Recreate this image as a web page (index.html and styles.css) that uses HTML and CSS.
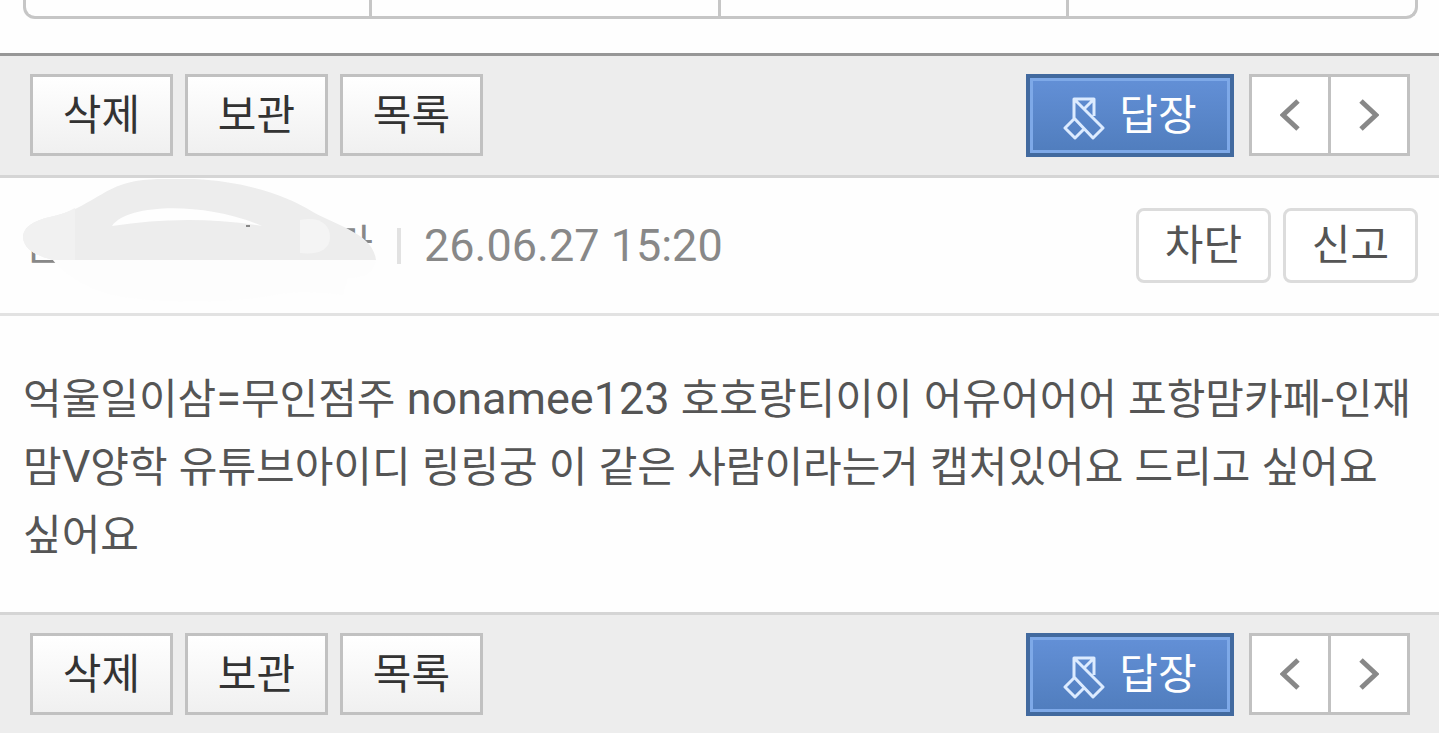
FILE: index.html
```
<!DOCTYPE html>
<html lang="ko">
  <head>
    <meta charset="UTF-8" />
    <meta name="viewport" content="width=device-width, initial-scale=1.0" />
    <title>쪽지</title>
    <link rel="stylesheet" href="styles.css">
  </head>

  <body>
    <div class="tabs">
      <div class="tab"></div>
      <div class="tab"></div>
      <div class="tab"></div>
      <div class="tab"></div>
    </div>

    <div class="toolbar toolbar-top">
      <div class="btn-group">
        <button class="btn" type="button">삭제</button>
        <button class="btn" type="button">보관</button>
        <button class="btn" type="button">목록</button>
      </div>
      <div class="btn-group right">
        <button class="btn-reply" type="button">
          <svg class="icon-reply" viewBox="0 0 42 44" aria-hidden="true">
            <path d="M11 22V2h20v17M11 2l29 29-10 10L11 21M31 2L21 12M12 21L2 31l10 10 10-10" />
          </svg>
          답장
        </button>
        <div class="pager">
          <button class="page" type="button" aria-label="이전">
            <svg class="arrow" viewBox="0 0 20 32"><path d="M18 2L3 16l15 14" /></svg>
          </button>
          <button class="page" type="button" aria-label="다음">
            <svg class="arrow" viewBox="0 0 20 32"><path d="M2 2l15 14L2 30" /></svg>
          </button>
        </div>
      </div>
    </div>

    <div class="info">
      <div class="sender">
        <span>인</span>
        <span>라</span>
        <svg class="scribble" viewBox="0 0 356 124" aria-hidden="true">
          <path fill="#fdfdfd" d="M29 80H353C352 92 344 99 325 99L320 116C285 112 270 112 240 118C190 125 105 125 70 110C50 100 38 92 29 80Z" />
          <path fill="#ededed" fill-rule="evenodd" d="M0 59C0 48 10 42 27 38C68 30 80 5 120 1C190-5 250 8 290 33C315 47 350 55 353 81H30C12 76 2 71 0 59ZM89 47C104 25 180 22 239 47C190 39 140 39 89 47Z" />
          <path fill="#f1f1f1" d="M0 59C0 48 10 42 27 38C37 36 45 33 52 29V81H30C12 76 2 71 0 59Z" />
          <path fill="#f4f4f4" d="M277 41C296 37 307 45 307 58S295 76 277 74Z" />
          <path fill="#888" d="M223 46h4v2h-4z" />
        </svg>
      </div>
      <span class="date">26.06.27 15:20</span>
      <div class="btn-group right">
        <button class="btn-sub" type="button">차단</button>
        <button class="btn-sub" type="button">신고</button>
      </div>
    </div>

    <p class="message">
      <span>억울일이삼</span>=<span>무인점주</span> nonamee123 <span>호호랑티이이</span> <span>어유어어어</span> <span>포항맘카페</span>-<span>인재맘</span>V<span>양학</span> <span>유튜브아이디</span> <span>링링궁</span> <span>이</span> <span>같은</span> <span>사람이라는거</span> <span>캡처있어요</span> <span>드리고</span> <span>싶어요</span> <span>싶어요</span>
    </p>

    <div class="toolbar toolbar-bottom">
      <div class="btn-group">
        <button class="btn" type="button">삭제</button>
        <button class="btn" type="button">보관</button>
        <button class="btn" type="button">목록</button>
      </div>
      <div class="btn-group right">
        <button class="btn-reply" type="button">
          <svg class="icon-reply" viewBox="0 0 42 44" aria-hidden="true">
            <path d="M11 22V2h20v17M11 2l29 29-10 10L11 21M31 2L21 12M12 21L2 31l10 10 10-10" />
          </svg>
          답장
        </button>
        <div class="pager">
          <button class="page" type="button" aria-label="이전">
            <svg class="arrow" viewBox="0 0 20 32"><path d="M18 2L3 16l15 14" /></svg>
          </button>
          <button class="page" type="button" aria-label="다음">
            <svg class="arrow" viewBox="0 0 20 32"><path d="M2 2l15 14L2 30" /></svg>
          </button>
        </div>
      </div>
    </div>
  </body>
</html>
```
FILE: styles.css
```
* {
  box-sizing: border-box;
}

body {
  margin: 0;
  background: #fefefe;
  color: #555;
  font-family: Roboto, "Noto Sans CJK KR", sans-serif;
  font-size: 42px;
}

button {
  margin: 0;
  padding: 0;
  font-family: inherit;
  font-size: 42px;
  line-height: 60px;
  cursor: pointer;
}

.tabs {
  display: flex;
  height: 19px;
  margin: 0 21px 34px 23px;
}

.tab {
  width: 25%;
  border-right: 3px solid #c6c6c6;
  border-bottom: 3px solid #c6c6c6;
}

.tab:first-child {
  border-left: 3px solid #c6c6c6;
  border-bottom-left-radius: 12px;
}

.tab:last-child {
  border-bottom-right-radius: 12px;
}

.toolbar {
  display: flex;
  align-items: flex-start;
  padding: 18px 29px 18px 30px;
  background: #ededed;
}

.toolbar-top {
  border-top: 3px solid #979797;
  border-bottom: 3px solid #d5d5d5;
}

.toolbar-bottom {
  border-top: 3px solid #d5d5d5;
}

.btn-group {
  display: flex;
  gap: 12px;
}

.right {
  margin-left: auto;
}

.toolbar .right {
  gap: 15px;
}

.btn {
  width: 143px;
  height: 82px;
  padding-top: 2px;
  border: 3px solid #c1c1c1;
  background: linear-gradient(#fff, #f0f0f0);
  color: #333;
}

.btn-reply {
  display: flex;
  justify-content: center;
  align-items: center;
  gap: 14px;
  width: 208px;
  height: 83px;
  border: 4px solid #426a9f;
  box-shadow: inset 0 0 0 3px #7ea9e8;
  background: linear-gradient(#6390d7, #507dbd);
  color: #fff;
}

.icon-reply {
  width: 42px;
  height: 44px;
  margin-top: 6px;
  fill: none;
  stroke: #dcebff;
  stroke-width: 3;
  stroke-linejoin: round;
}

.pager {
  display: flex;
  height: 82px;
  border: 3px solid #c1c1c1;
  background: #fff;
}

.page {
  display: flex;
  justify-content: center;
  align-items: center;
  width: 76px;
  border: none;
  background: none;
}

.page + .page {
  width: 79px;
  border-left: 3px solid #c1c1c1;
}

.arrow {
  width: 20px;
  height: 32px;
  fill: none;
  stroke: #888;
  stroke-width: 5;
}

.info {
  display: flex;
  align-items: center;
  padding: 30px 21px 30px 23px;
  border-bottom: 3px solid #e2e2e2;
  color: #888;
}

.sender {
  position: relative;
  display: flex;
  justify-content: space-between;
  width: 350px;
  line-height: 60px;
}

/* pen mark drawn over the sender name */
.scribble {
  position: absolute;
  top: -37px;
  left: 0;
  width: 356px;
  height: 124px;
}

.date {
  display: flex;
  align-items: center;
  font-size: 45px;
  line-height: 60px;
}

.date::before {
  content: "";
  width: 4px;
  height: 36px;
  margin: 0 23px 0 24px;
  background: #e2e2e2;
}

.btn-sub {
  width: 135px;
  height: 75px;
  border: 3px solid #dcdcdc;
  border-radius: 8px;
  background: #fff;
  color: #555;
}

.message {
  margin: 0;
  padding: 49px 23px 43px;
  font-size: 45px;
  line-height: 67px;
  word-break: break-all;
}

/* hangul runs a little smaller than the latin text */
.message span {
  font-size: 42px;
}
```
